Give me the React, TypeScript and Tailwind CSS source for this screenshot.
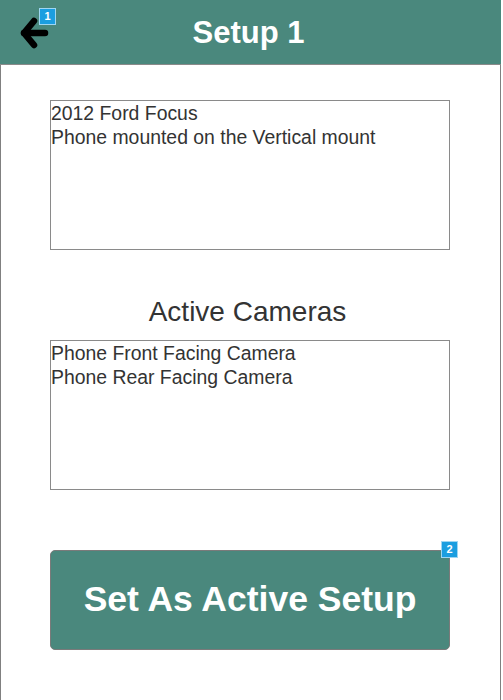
import React from "react";

function Badge({ n }: { n: string }) {
  return (
    <div className="absolute flex h-[17px] w-[17px] items-center justify-center border border-[#9fd6f2] bg-[#1b9ee0] text-[11px] font-bold leading-none text-white">
      {n}
    </div>
  );
}

export default function App() {
  return (
    <div
      className="relative h-[700px] w-[501px] overflow-hidden bg-white"
      style={{ fontFamily: '"Liberation Sans", Arial, sans-serif' }}
    >
      <header className="relative flex h-[65px] items-center justify-center border-b border-[#8a8a8a] bg-[#4a887d]">
        <svg
          className="absolute left-[18px] top-[15px]"
          width="34"
          height="36"
          viewBox="0 0 34 36"
          fill="none"
          stroke="#000"
          strokeWidth="6.5"
          strokeLinecap="round"
          strokeLinejoin="round"
        >
          <path d="M16 6 L6 18 L16 30" />
          <path d="M6 18 L27 18" />
        </svg>
        <div className="absolute left-[39px] top-[8px]">
          <Badge n="1" />
        </div>
        <h1 className="pr-[4px] pt-[3px] text-[31px] font-bold text-white">Setup 1</h1>
      </header>
      <main className="flex h-[635px] flex-col border-x border-[#808080] pl-[49px] pt-[35px]">
        <div className="h-[150px] w-[400px] border border-[#8a8a8a] text-[19.4px] leading-[24px] text-[#333]">
          <div>2012 Ford Focus</div>
          <div>Phone mounted on the Vertical mount</div>
        </div>
        <h2 className="mt-[46px] h-[32px] w-[400px] pr-[5px] text-center text-[28px] leading-[32px] text-[#333]">
          Active Cameras
        </h2>
        <div className="mt-[12px] h-[150px] w-[400px] border border-[#8a8a8a] text-[19.4px] leading-[24px] text-[#333]">
          <div>Phone Front Facing Camera</div>
          <div>Phone Rear Facing Camera</div>
        </div>
        <div className="relative mt-[60px] w-[400px]">
          <button className="flex h-[100px] w-[400px] items-center justify-center rounded-[5px] border border-[#7a7a7a] bg-[#4a887d] text-[35.5px] font-bold text-white">
            Set As Active Setup
          </button>
          <div className="absolute left-[391px] top-[-9px]">
            <Badge n="2" />
          </div>
        </div>
      </main>
    </div>
  );
}
